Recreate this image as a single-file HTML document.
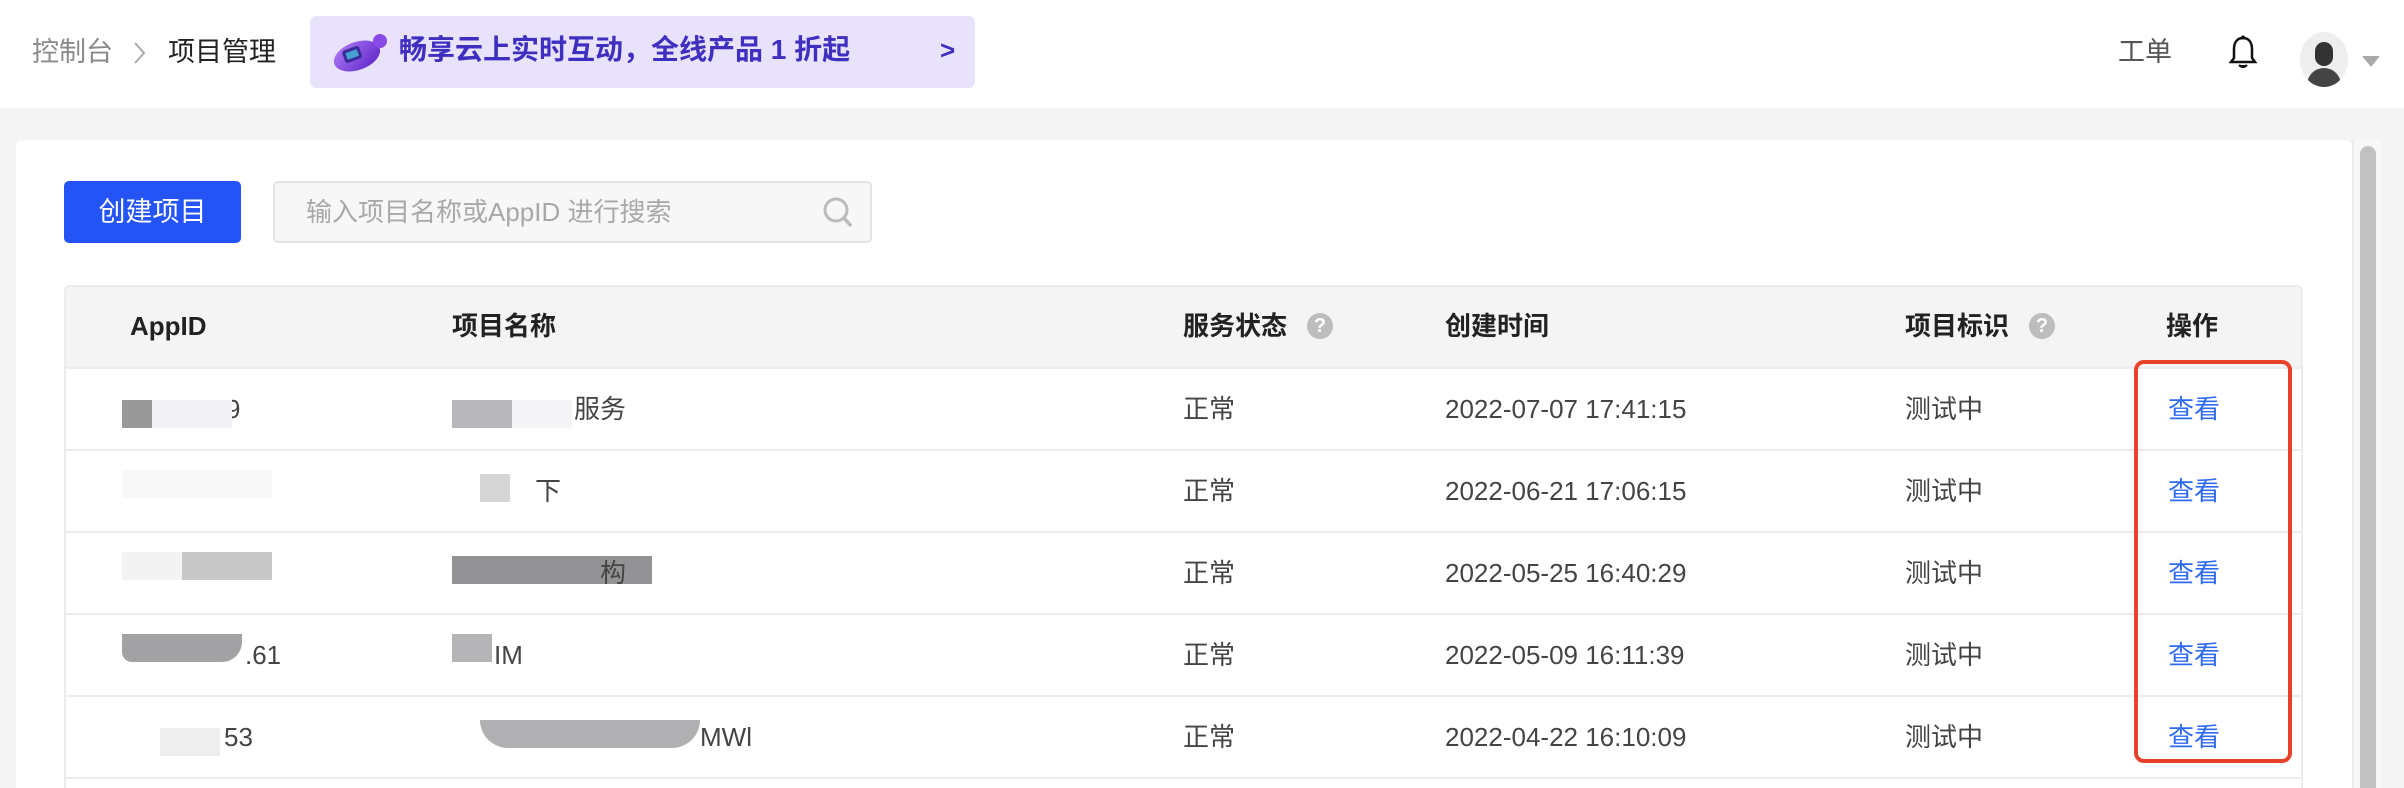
<!DOCTYPE html>
<html style="width:2404px;height:788px;overflow:hidden"><head><meta charset="utf-8"><style>
*{margin:0;padding:0;box-sizing:border-box}
body{width:2404px;height:788px;background:#f4f4f4;font-family:"Liberation Sans","Noto Sans CJK SC",sans-serif;position:relative;overflow:hidden;color:#333}
.abs{position:absolute}
.hdr{left:0;top:0;width:2404px;height:108px;background:#fff}
.card{left:16px;top:140px;width:2336px;height:648px;background:#fff;border-radius:6px 6px 0 0}
.t{position:absolute;font-size:26px;white-space:nowrap;line-height:30px}
.th{font-weight:bold;color:#222;font-size:26px}
.line{position:absolute;left:64px;width:2239px;height:2px;background:#ececec}
.q{display:inline-block;width:26px;height:26px;border-radius:50%;background:#bdbdbd;color:#fff;font-size:20px;text-align:center;line-height:26px;font-weight:bold;vertical-align:middle;margin-left:20px;margin-top:-4px}
.blk{position:absolute;height:28px}
</style></head><body>
<div class="abs hdr"></div>
<div class="t" style="left:32px;top:37px;color:#8a8a8a;font-size:27px">控制台</div>
<svg class="abs" style="left:132px;top:40px" width="16" height="26"><path d="M3 3 L12 13 L3 23" stroke="#aaa" stroke-width="2" fill="none"/></svg>
<div class="t" style="left:168px;top:37px;color:#222;font-size:27px">项目管理</div>
<div class="abs" style="left:310px;top:16px;width:665px;height:72px;background:#e8e3fb;border-radius:6px"></div>
<svg class="abs" style="left:330px;top:28px" width="62" height="48" viewBox="0 0 62 48">
<defs><linearGradient id="g" x1="0" y1="0" x2="1" y2="1"><stop offset="0" stop-color="#b27cf6"/><stop offset="1" stop-color="#5a22c8"/></linearGradient></defs>
<ellipse cx="27" cy="28" rx="24" ry="14" transform="rotate(-20 27 28)" fill="url(#g)"/>
<circle cx="50" cy="13" r="7" fill="#8a4ae6"/>
<rect x="13" y="20" width="18" height="13" rx="3" transform="rotate(-20 22 26)" fill="#3a2a9a"/>
<rect x="16" y="23" width="12" height="7" transform="rotate(-20 22 26)" fill="#4fd1e8" opacity=".7"/>
</svg>
<div class="t" style="left:399px;top:35px;color:#3f2fc0;font-weight:bold;font-size:28px">畅享云上实时互动，全线产品 1 折起</div>
<div class="t" style="left:940px;top:35px;color:#3f2fc0;font-weight:bold;font-size:26px">&gt;</div>
<div class="t" style="left:2118px;top:37px;color:#555;font-size:27px">工单</div>
<svg class="abs" style="left:2228px;top:34px" width="30" height="38" viewBox="0 0 30 38"><path d="M15 4 C8 4 6 10 6 15 L6 24 L3 28 L27 28 L24 24 L24 15 C24 10 22 4 15 4 Z" fill="none" stroke="#111" stroke-width="2.5"/><circle cx="15" cy="3.5" r="2" fill="#111"/><path d="M11 31 Q15 35 19 31" fill="#111" stroke="#111" stroke-width="2"/></svg>
<div class="abs" style="left:2300px;top:32px;width:48px;height:55px;border-radius:50%;background:#eeeeee;overflow:hidden">
<div class="abs" style="left:15px;top:10px;width:18px;height:24px;border-radius:9px;background:#333"></div>
<div class="abs" style="left:7px;top:36px;width:34px;height:24px;border-radius:17px 17px 0 0;background:#444"></div></div>
<svg class="abs" style="left:2362px;top:54px" width="18" height="14"><path d="M0 2 L18 2 L9 13 Z" fill="#aaa"/></svg>

<div class="abs card"></div>
<div class="abs" style="left:2352px;top:140px;width:29px;height:648px;background:#f8f8f8;border-left:2px solid #ebebeb"></div>
<div class="abs" style="left:2360px;top:146px;width:16px;height:660px;background:#c1c1c1;border-radius:8px"></div>
<div class="abs" style="left:64px;top:181px;width:177px;height:62px;background:#2454f5;border-radius:5px;color:#fff;font-size:27px;text-align:center;line-height:62px">创建项目</div>
<div class="abs" style="left:273px;top:181px;width:599px;height:62px;background:#f7f7f7;border:2px solid #e3e3e3;border-radius:5px"></div>
<div class="t" style="left:306px;top:197px;color:#a8a8a8;font-size:26px">输入项目名称或AppID 进行搜索</div>
<svg class="abs" style="left:822px;top:196px" width="32" height="34"><circle cx="14" cy="14" r="11" stroke="#bbb" stroke-width="3" fill="none"/><path d="M22 22 L29 30" stroke="#bbb" stroke-width="3.5"/></svg>

<div class="abs" style="left:64px;top:285px;width:2239px;height:83px;background:#f4f4f4;border:2px solid #ececec;border-bottom:none;border-radius:6px 6px 0 0"></div>
<div class="t th" style="left:130px;top:311px">AppID</div>
<div class="t th" style="left:452px;top:311px">项目名称</div>
<div class="t th" style="left:1183px;top:311px">服务状态<span class="q">?</span></div>
<div class="t th" style="left:1445px;top:311px">创建时间</div>
<div class="t th" style="left:1905px;top:311px">项目标识<span class="q">?</span></div>
<div class="t th" style="left:2166px;top:311px">操作</div>
<div class="abs" style="left:64px;top:368px;width:2px;height:420px;background:#ececec"></div>
<div class="abs" style="left:2301px;top:368px;width:2px;height:420px;background:#ececec"></div>
<div class="line" style="top:367px"></div>
<div class="line" style="top:449px"></div>
<div class="line" style="top:531px"></div>
<div class="line" style="top:613px"></div>
<div class="line" style="top:695px"></div>
<div class="line" style="top:777px"></div>

<div class="t" style="left:1183px;top:394px;color:#444">正常</div>
<div class="t" style="left:1445px;top:394px;color:#444">2022-07-07 17:41:15</div>
<div class="t" style="left:1905px;top:394px;color:#444">测试中</div>
<div class="t" style="left:2168px;top:394px;color:#2f6bf0">查看</div>
<div class="t" style="left:1183px;top:476px;color:#444">正常</div>
<div class="t" style="left:1445px;top:476px;color:#444">2022-06-21 17:06:15</div>
<div class="t" style="left:1905px;top:476px;color:#444">测试中</div>
<div class="t" style="left:2168px;top:476px;color:#2f6bf0">查看</div>
<div class="t" style="left:1183px;top:558px;color:#444">正常</div>
<div class="t" style="left:1445px;top:558px;color:#444">2022-05-25 16:40:29</div>
<div class="t" style="left:1905px;top:558px;color:#444">测试中</div>
<div class="t" style="left:2168px;top:558px;color:#2f6bf0">查看</div>
<div class="t" style="left:1183px;top:640px;color:#444">正常</div>
<div class="t" style="left:1445px;top:640px;color:#444">2022-05-09 16:11:39</div>
<div class="t" style="left:1905px;top:640px;color:#444">测试中</div>
<div class="t" style="left:2168px;top:640px;color:#2f6bf0">查看</div>
<div class="t" style="left:1183px;top:722px;color:#444">正常</div>
<div class="t" style="left:1445px;top:722px;color:#444">2022-04-22 16:10:09</div>
<div class="t" style="left:1905px;top:722px;color:#444">测试中</div>
<div class="t" style="left:2168px;top:722px;color:#2f6bf0">查看</div>

<div class="t" style="left:226px;top:394px;color:#444">9</div>
<div class="blk" style="left:122px;top:400px;width:30px;background:#999"></div>
<div class="blk" style="left:152px;top:400px;width:80px;background:#f2f2f6"></div>
<div class="t" style="left:574px;top:394px;color:#444">服务</div>
<div class="blk" style="left:452px;top:400px;width:60px;background:#b8b8bc"></div>
<div class="blk" style="left:512px;top:400px;width:60px;background:#f5f5f8"></div>
<div class="blk" style="left:122px;top:470px;width:150px;background:#f8f8f8"></div>
<div class="blk" style="left:480px;top:474px;width:30px;background:#d6d6d6"></div>
<div class="t" style="left:535px;top:476px;color:#444">下</div>
<div class="blk" style="left:122px;top:552px;width:60px;background:#f3f3f3"></div>
<div class="blk" style="left:182px;top:552px;width:90px;background:#c8c8c8"></div>
<div class="blk" style="left:452px;top:556px;width:200px;background:#939396"></div>
<div class="t" style="left:600px;top:558px;color:#444">构</div>
<div class="blk" style="left:122px;top:634px;width:120px;background:#a2a2a4;border-radius:0 0 20px 10px"></div>
<div class="t" style="left:245px;top:640px;color:#444">.61</div>
<div class="blk" style="left:452px;top:634px;width:40px;background:#b5b5b8"></div>
<div class="t" style="left:494px;top:640px;color:#444">IM</div>
<div class="t" style="left:224px;top:722px;color:#444">53</div>
<div class="blk" style="left:160px;top:728px;width:60px;background:#eeeeee"></div>
<div class="blk" style="left:480px;top:720px;width:220px;background:#b0b0b2;border-radius:0 0 30px 30px"></div>
<div class="t" style="left:700px;top:722px;color:#444">MWl</div>

<div class="abs" style="left:2134px;top:360px;width:158px;height:403px;border:4px solid #e8412a;border-radius:10px"></div>
</body></html>
